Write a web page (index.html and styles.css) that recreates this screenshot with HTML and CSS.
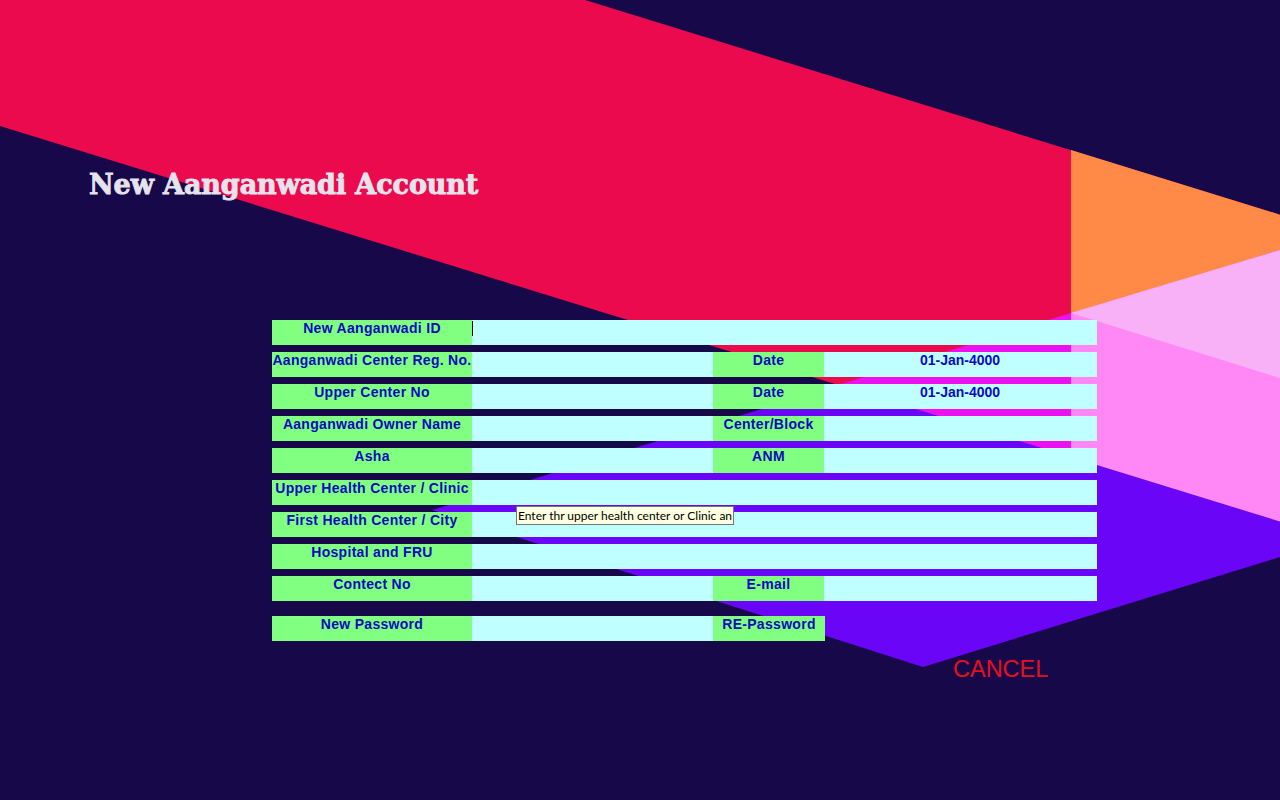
FILE: index.html
```html
<!DOCTYPE html>
<html>
<head>
<meta charset="utf-8">
<title>New Aanganwadi Account</title>
<link rel="stylesheet" href="styles.css">
</head>
<body>
<div class="page">
  <svg class="bg" width="1280" height="800" viewBox="0 0 1280 800" aria-hidden="true">
    <polygon fill="#EC0A4E" points="0,0 585,0 1280,214.7 1280,521.5 0,126"/>
    <polygon fill="#FF8946" points="1071,150 1280,214.7 1280,521.5 1071,457"/>
    <polygon fill="#6A05F8" points="432,510 1280,250 1280,557 923,667"/>
    <polygon fill="#EE10EE" points="838,385 1071,313 1071,457"/>
    <polygon fill="#FF88F6" points="1071,313 1280,250 1280,521.5 1071,457"/>
    <polygon fill="#F8B0F6" points="1071,313 1280,250 1280,378"/>
  </svg>

  <div class="content">
    <h1 class="title">New Aanganwadi Account</h1>

    <div class="form">
      <div class="row">
        <div class="label">New Aanganwadi ID</div>
        <div class="field wide"><span class="caret"></span></div>
      </div>
      <div class="row">
        <div class="label">Aanganwadi Center Reg. No.</div>
        <div class="field"></div>
        <div class="label">Date</div>
        <div class="field value">01-Jan-4000</div>
      </div>
      <div class="row">
        <div class="label">Upper Center No</div>
        <div class="field"></div>
        <div class="label">Date</div>
        <div class="field value">01-Jan-4000</div>
      </div>
      <div class="row">
        <div class="label">Aanganwadi Owner Name</div>
        <div class="field"></div>
        <div class="label">Center/Block</div>
        <div class="field"></div>
      </div>
      <div class="row">
        <div class="label">Asha</div>
        <div class="field"></div>
        <div class="label">ANM</div>
        <div class="field"></div>
      </div>
      <div class="row">
        <div class="label">Upper Health Center / Clinic</div>
        <div class="field wide"></div>
      </div>
      <div class="row">
        <div class="label">First Health Center / City</div>
        <div class="field wide"></div>
      </div>
      <div class="row">
        <div class="label">Hospital and FRU</div>
        <div class="field wide"></div>
      </div>
      <div class="row">
        <div class="label">Contect No</div>
        <div class="field"></div>
        <div class="label">E-mail</div>
        <div class="field"></div>
      </div>
      <div class="row last">
        <div class="label">New Password</div>
        <div class="field"></div>
        <div class="label">RE-Password</div>
      </div>
    </div>

    <div class="actions">
      <span class="cancel">CANCEL</span>
    </div>
  </div>

  <div class="tooltip">Enter thr upper health center or Clinic an</div>
</div>
</body>
</html>
```

FILE: styles.css
```css
html, body {
  margin: 0;
  padding: 0;
  background: #17084A;
}

.page {
  position: relative;
  width: 1280px;
  height: 800px;
  overflow: hidden;
  background: #17084A;
}

.bg {
  position: absolute;
  left: 0;
  top: 0;
  display: block;
}

.content {
  position: relative;
  padding-top: 169px;
}

.title {
  margin: 0 0 0 89px;
  font-family: "DejaVu Serif", "Liberation Serif", serif;
  font-weight: bold;
  font-size: 27px;
  line-height: 32px;
  height: 32px;
  letter-spacing: -0.1px;
  color: #E5E4EC;
  -webkit-text-stroke: 0.9px #E5E4EC;
  white-space: nowrap;
}

.form {
  margin: 119px 0 0 272px;
  width: 825px;
  display: flex;
  flex-direction: column;
  gap: 7px;
}

.row {
  display: grid;
  grid-template-columns: 200px 241px 111px 273px;
  height: 25px;
}

.row.last {
  margin-top: 8px;
  grid-template-columns: 200px 241px 112px;
}

.label {
  background: #80FF80;
  color: #0A0ABE;
  font-family: "Liberation Sans", Arial, sans-serif;
  font-weight: bold;
  font-size: 14px;
  line-height: 16px;
  letter-spacing: 0.3px;
  text-align: center;
  white-space: nowrap;
  overflow: hidden;
}

.field {
  background: #C0FFFF;
  display: flex;
  align-items: flex-start;
}

.field.wide {
  grid-column: 2 / -1;
}

.field.value {
  justify-content: center;
  color: #0A0ABE;
  font-family: "Liberation Sans", Arial, sans-serif;
  font-weight: bold;
  font-size: 14px;
  line-height: 16px;
  padding-right: 1px;
}

.caret {
  display: block;
  width: 1px;
  height: 15px;
  margin-top: 1px;
  background: #000;
}

.actions {
  margin: 15px 0 0 953px;
}

.cancel {
  font-family: "Liberation Sans", Arial, sans-serif;
  font-size: 23.5px;
  line-height: 26px;
  color: #E4101C;
}

.tooltip {
  position: absolute;
  left: 516px;
  top: 506px;
  height: 17px;
  white-space: nowrap;
  background: #FFFFE1;
  border: 1px solid #767676;
  font-family: "Lato", "Noto Sans", sans-serif;
  font-size: 12px;
  line-height: 17px;
  color: #000;
  padding: 0 1px 0 1px;
}
```
